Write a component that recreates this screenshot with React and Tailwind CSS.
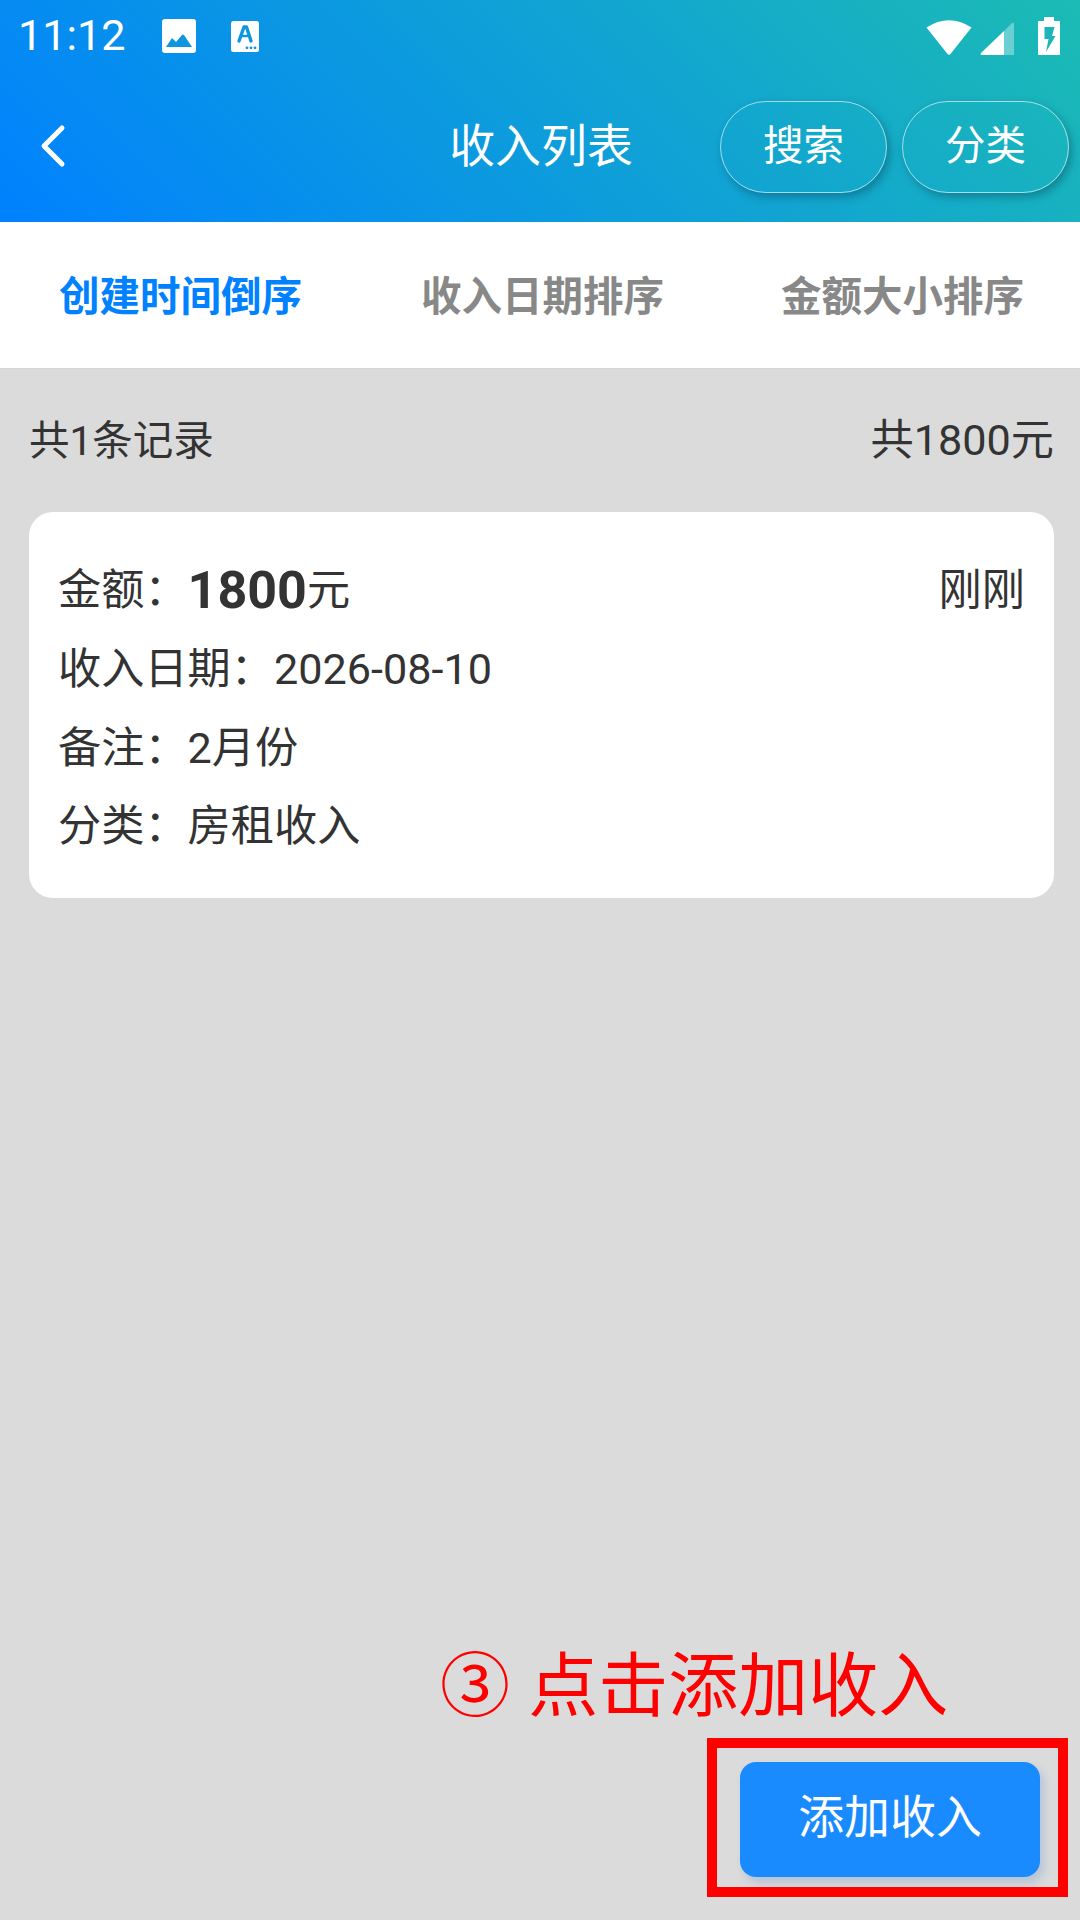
const FF = { fontFamily: '"Roboto","Noto Sans CJK SC",sans-serif' };

function Row({ label, children }) {
  return (
    <div className="flex items-center h-[78.7px] text-[43.2px] text-[#333]">
      <span>{label}：</span>
      <span>{children}</span>
    </div>
  );
}

export default function App() {
  return (
    <div className="relative w-[1080px] h-[1920px] overflow-hidden flex flex-col bg-[#dbdbdb]" style={FF}>
      <header className="h-[222px] shrink-0 bg-[linear-gradient(45deg,#0081ff,#1cbbb4)] text-white">
        <div className="h-[72px] flex items-center">
          <span className="ml-[18px] text-[43.2px] leading-none">11:12</span>
          <svg className="ml-[35px]" width="36" height="36" viewBox="0 0 36 36">
            <rect x="1" y="1" width="34" height="34" rx="3" fill="#fff" />
            <path d="M5 29 L11 20 L15 24 L21 17 Q22 16 23 17 L31 29 Z" fill="#0e97de" />
          </svg>
          <svg className="ml-[34px]" width="28" height="31" viewBox="0 0 28 31">
            <rect x="0" y="0" width="28" height="31" rx="2.5" fill="#fff" />
            <path d="M8 20 L13 6 H15.5 L20 20" fill="none" stroke="#0e97de" strokeWidth="3.4" strokeLinecap="round" strokeLinejoin="round" />
            <path d="M11 15 H17" stroke="#0e97de" strokeWidth="2.4" />
            <circle cx="16" cy="26.8" r="1.4" fill="#0e97de" /><circle cx="20" cy="26.8" r="1.4" fill="#0e97de" /><circle cx="24" cy="26.8" r="1.4" fill="#0e97de" />
          </svg>
          <div className="ml-auto flex items-end mr-[20px] h-[38px]">
            <svg width="46" height="36" viewBox="0 0 46 36">
              <path d="M0.5 8.5 Q23 -6 45.5 8.5 L24.5 35 Q23 36.5 21.5 35 Z" fill="#fff" />
            </svg>
            <svg className="ml-[8px]" width="34" height="33" viewBox="0 0 34 33">
              <path d="M24 9 L32 1 Q34 0 34 2 V33 H24 Z" fill="#fff" opacity="0.35" />
              <path d="M24 9 V33 H1 Q0 32 1 31 Z" fill="#fff" />
            </svg>
            <svg className="ml-[24px]" width="22" height="38" viewBox="0 0 22 38">
              <path d="M6 0 H16 V4 H21 Q22 4 22 5 V37 Q22 38 21 38 H1 Q0 38 0 37 V5 Q0 4 1 4 H6 Z" fill="#fff" />
              <path d="M6.5 10 H16.5 L14 19 H17.5 L8 35 L10.5 22 H6.5 Z" fill="#1cb5bb" />
            </svg>
          </div>
        </div>
        <div className="grid grid-cols-[1fr_auto_1fr] items-center h-[92px] mt-[29px]">
          <svg className="ml-[39px] -mt-[3px]" width="28" height="44" viewBox="0 0 28 44">
            <path d="M23 4 L5 22 L23 40" fill="none" stroke="#fff" strokeWidth="5" strokeLinecap="round" strokeLinejoin="round" />
          </svg>
          <div className="text-[45.9px] leading-none -mt-[1px] ml-[2px]">收入列表</div>
          <div className="flex justify-end gap-[15px] pr-[11px]">
            <div className="w-[167px] h-[92px] rounded-full border border-white/60 shadow-[3px_4px_8px_rgba(0,50,70,0.35)] flex items-center justify-center pb-[2px] text-[40.5px]">搜索</div>
            <div className="w-[167px] h-[92px] rounded-full border border-white/60 shadow-[3px_4px_8px_rgba(0,50,70,0.35)] flex items-center justify-center pb-[2px] text-[40.5px]">分类</div>
          </div>
        </div>
      </header>

      <nav className="h-[147px] shrink-0 grid grid-cols-3 bg-white border-b border-[#d6d6d6] text-[40.5px] font-bold text-[#888]">
        <div className="flex items-center justify-center pt-[5px] pl-[1px] text-[#0081ff]">创建时间倒序</div>
        <div className="flex items-center justify-center pt-[5px] pl-[5px]">收入日期排序</div>
        <div className="flex items-center justify-center pt-[5px] pl-[5px]">金额大小排序</div>
      </nav>

      <main className="flex-1 pl-[29px] pr-[26px]">
        <div className="flex justify-between items-center h-[143px] pt-[1px] text-[#333]">
          <span className="text-[40.5px]">共1条记录</span>
          <span className="text-[43.2px]">共1800元</span>
        </div>
        <section className="h-[386px] rounded-[24px] bg-white px-[29px] pt-[39px]">
          <div className="flex items-center justify-between h-[80px] text-[43.2px] text-[#333]">
            <div className="flex items-center">
              <span>金额：</span>
              <span className="text-[52px] font-bold">1800</span>
              <span>元</span>
            </div>
            <span>刚刚</span>
          </div>
          <Row label="收入日期">2026-08-10</Row>
          <Row label="备注">2月份</Row>
          <Row label="分类">房租收入</Row>
        </section>
      </main>

      <div className="shrink-0 flex justify-end pr-[40px] pb-[43px]">
        <div className="w-[300px] h-[115px] rounded-[16px] bg-[#1a8bff] text-white text-[45.9px] flex items-center justify-center pb-[5px] shadow-[4px_6px_10px_rgba(30,100,200,0.2)]">添加收入</div>
      </div>

      <div className="absolute left-[440px] top-[1652px] text-[70px] leading-none text-[#ff0000] whitespace-nowrap [word-spacing:1px]">③ 点击添加收入</div>
      <div className="absolute left-[707px] top-[1738px] w-[361px] h-[159px] border-[10px] border-[#ff0000]" />
    </div>
  );
}
